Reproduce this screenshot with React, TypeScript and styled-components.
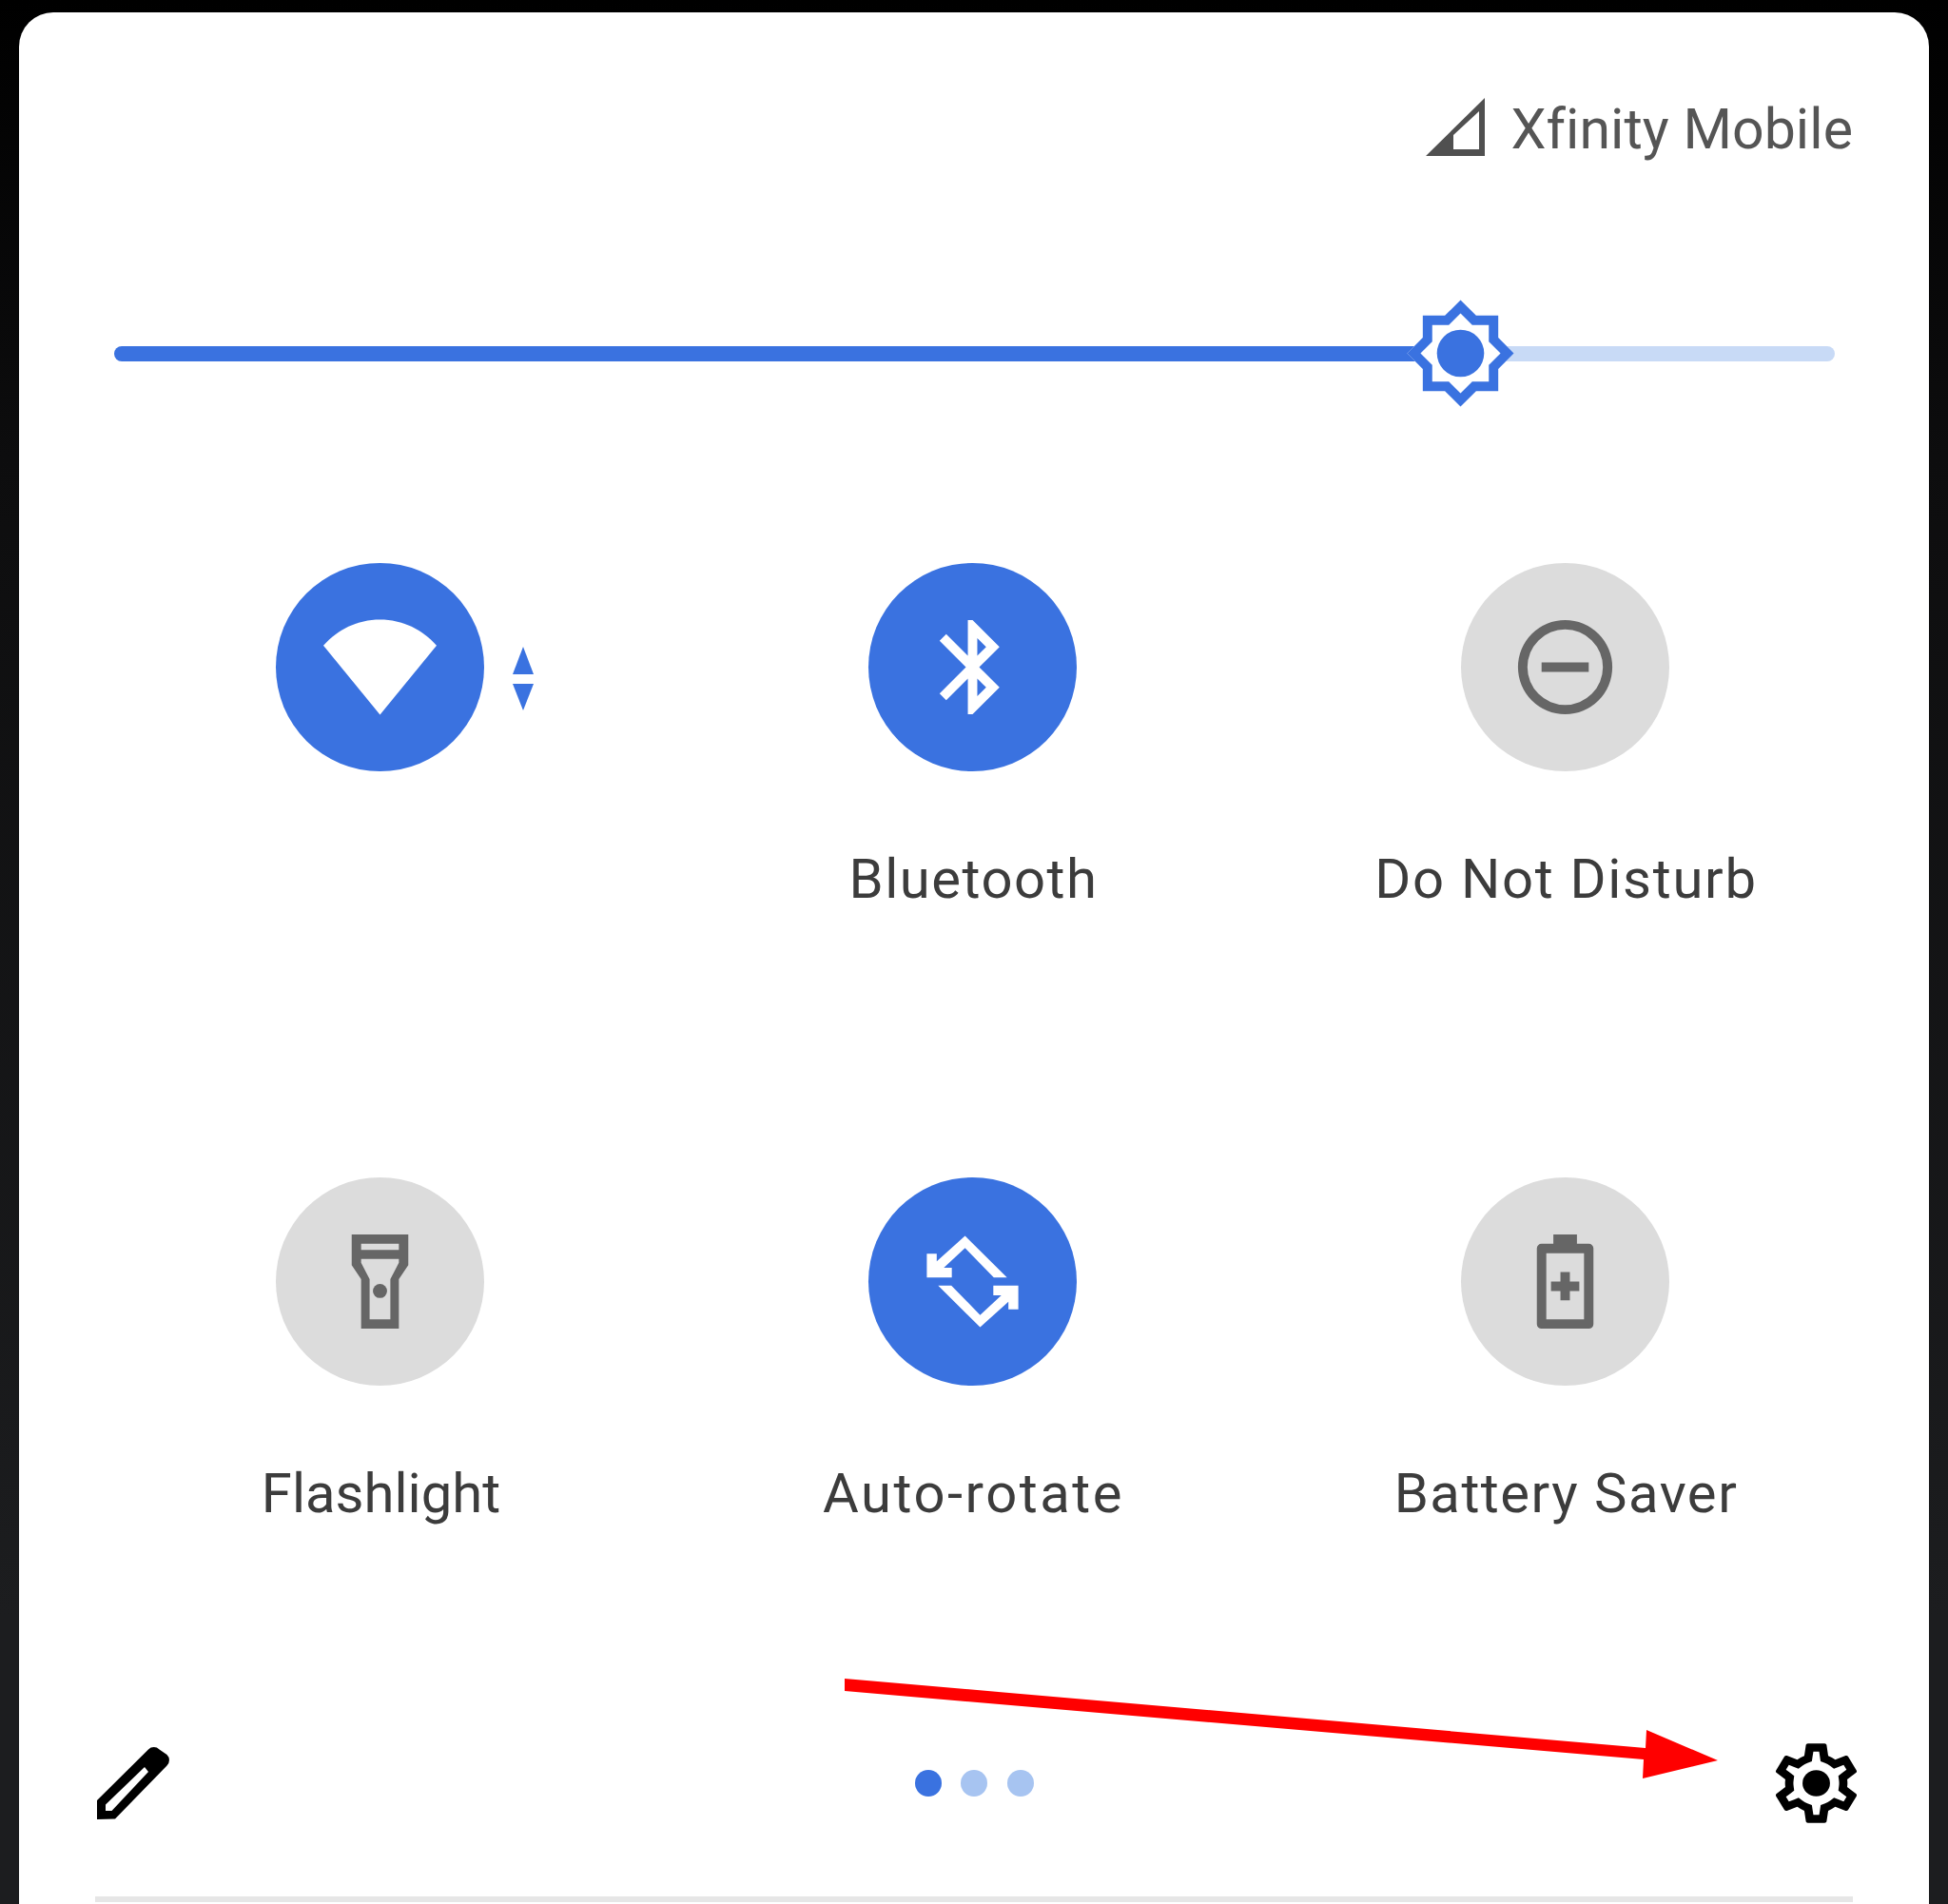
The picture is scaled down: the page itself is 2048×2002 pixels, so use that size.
import React from "react";
import styled, { createGlobalStyle } from "styled-components";

const Global = createGlobalStyle`
  html, body { margin: 0; padding: 0; }
  body { font-family: Roboto, "Noto Sans", sans-serif; }
`;

const Page = styled.div`
  position: relative;
  width: 2048px;
  height: 2002px;
  overflow: hidden;
  box-sizing: border-box;
  padding: 13px 20px 0 20px;
  background: linear-gradient(#000 0, #0d0d0e 480px, #1c1d1f 1700px);
`;

const Panel = styled.div`
  width: 2008px;
  height: 2040px;
  box-sizing: border-box;
  background: #fff;
  border-radius: 36px 36px 0 0;
  display: flex;
  flex-direction: column;
  padding-top: 91px;
  filter: blur(0.6px);
`;

const Carrier = styled.div`
  display: flex;
  justify-content: flex-end;
  align-items: center;
  gap: 27px;
  height: 64px;
  padding-right: 80px;
  color: #555;
  font-size: 59px;
  line-height: 64px;
  letter-spacing: 0.05px;
`;

const CarrierIcon = styled.svg`
  width: 62px;
  height: 61px;
  margin-top: -5px;
  fill: #505050;
`;

const SliderRow = styled.div`
  display: flex;
  align-items: center;
  height: 119px;
  margin: 144px 99px 0 100px;
`;

const TrackFill = styled.div`
  flex: 0 0 1368px;
  height: 16px;
  margin-right: -12px;
  border-radius: 8px 0 0 8px;
  background: #3a72e0;
`;

const Thumb = styled.svg`
  flex: none;
  width: 119px;
  height: 119px;
  position: relative;
  z-index: 1;
`;

const TrackRest = styled.div`
  flex: 1;
  height: 16px;
  margin-left: -12px;
  border-radius: 0 8px 8px 0;
  background: #c8daf6;
`;

const Grid = styled.div`
  display: grid;
  grid-template-columns: repeat(3, 623px);
  row-gap: 280.5px;
  margin: 160.5px 0 0 67.5px;
`;

const Tile = styled.div`
  display: flex;
  flex-direction: column;
  align-items: center;
  height: 365.5px;
`;

const Circle = styled.div<{ $on: boolean }>`
  position: relative;
  flex: none;
  width: 219px;
  height: 219px;
  border-radius: 50%;
  display: flex;
  align-items: center;
  justify-content: center;
  background: ${(p) => (p.$on ? "#3a72e0" : "#dcdcdc")};
  color: ${(p) => (p.$on ? "#fff" : "#666")};
`;

const Glyph = styled.svg`
  width: 119px;
  height: 119px;
  fill: currentColor;
`;

const Activity = styled.svg`
  position: absolute;
  left: 249.5px;
  top: 88.5px;
  width: 22px;
  height: 67px;
  fill: #3a72e0;
`;

const Label = styled.div<{ $track: number }>`
  margin-top: 81px;
  padding-left: 3px;
  font-size: 58px;
  line-height: 64px;
  letter-spacing: ${(p) => p.$track}px;
  color: #3c3c3c;
  white-space: nowrap;
`;

const Footer = styled.div`
  display: grid;
  grid-template-columns: 1fr auto 1fr;
  align-items: center;
  height: 100px;
  margin: 222px 80px 0;
`;

const Pencil = styled.svg`
  width: 80px;
  height: 80px;
  fill: #000;
`;

const Dots = styled.div`
  display: flex;
  gap: 20.5px;
`;

const Dot = styled.span<{ $active?: boolean }>`
  width: 28px;
  height: 28px;
  border-radius: 50%;
  background: ${(p) => (p.$active ? "#3a72e0" : "#a7c4f1")};
`;

const Gear = styled.svg`
  justify-self: end;
  width: 105px;
  height: 100px;
  margin-right: -13.5px;
  fill: #000;
`;

const Divider = styled.div`
  height: 6px;
  margin: 69px 80px 0;
  background: #e6e6e6;
`;

const Annotation = styled.svg`
  position: absolute;
  left: 0;
  top: 0;
  width: 2048px;
  height: 2002px;
  pointer-events: none;
  z-index: 2;
`;

const GEAR =
  "M19.43 12.98c.04-.32.07-.64.07-.98 0-.34-.03-.66-.07-.98l2.11-1.65c.19-.15.24-.42.12-.64l-2-3.46c-.09-.16-.26-.25-.44-.25-.06 0-.12.01-.17.03l-2.49 1c-.52-.4-1.08-.73-1.69-.98l-.38-2.65C14.46 2.18 14.25 2 14 2h-4c-.25 0-.46.18-.49.42l-.38 2.65c-.61.25-1.17.59-1.69.98l-2.49-1c-.06-.02-.12-.03-.18-.03-.17 0-.34.09-.43.25l-2 3.46c-.13.22-.07.49.12.64l2.11 1.65c-.04.32-.07.65-.07.98 0 .33.03.66.07.98l-2.11 1.65c-.19.15-.24.42-.12.64l2 3.46c.09.16.26.25.44.25.06 0 .12-.01.17-.03l2.49-1c.52.4 1.08.73 1.69.98l.38 2.65c.03.24.24.42.49.42h4c.25 0 .46-.18.49-.42l.38-2.65c.61-.25 1.17-.59 1.69-.98l2.49 1c.06.02.12.03.18.03.17 0 .34-.09.43-.25l2-3.46c.12-.22.07-.49-.12-.64l-2.11-1.65zm-1.98-1.71c.04.31.05.52.05.73 0 .21-.02.43-.05.73l-.14 1.13.89.7 1.08.84-.7 1.21-1.27-.51-1.04-.42-.9.68c-.43.32-.84.56-1.25.73l-1.06.43-.16 1.13-.2 1.35h-1.4l-.19-1.35-.16-1.13-1.06-.43c-.43-.18-.83-.41-1.23-.71l-.91-.7-1.06.43-1.27.51-.7-1.21 1.08-.84.89-.7-.14-1.13c-.03-.31-.05-.54-.05-.74s.02-.43.05-.73l.14-1.13-.89-.7-1.08-.84.7-1.21 1.27.51 1.04.42.9-.68c.43-.32.84-.56 1.25-.73l1.06-.43.16-1.13.2-1.35h1.39l.19 1.35.16 1.13 1.06.43c.43.18.83.41 1.23.71l.91.7 1.06-.43 1.27-.51.7 1.21-1.07.85-.89.7.14 1.13z";

const WifiIcon = () => (
  <Glyph viewBox="0 0 24 24">
    <path d="M0 7.4C3 4 7.2 1.9 12 1.9S21 4 24 7.4L12 22.1Z" />
  </Glyph>
);
const BluetoothIcon = () => (
  <Glyph viewBox="0 0 24 24">
    <path d="M17.71 7.71L12 2h-1v7.59L6.41 5 5 6.41 10.59 12 5 17.59 6.41 19 11 14.41V22h1l5.71-5.71-4.3-4.29 4.3-4.29zM13 5.83l1.88 1.88L13 9.59V5.83zm1.88 10.46L13 18.17v-3.76l1.88 1.88z" />
  </Glyph>
);
const DndIcon = () => (
  <Glyph viewBox="0 0 24 24">
    <path
      fillRule="evenodd"
      d="M12 2a10 10 0 1 0 0 20 10 10 0 0 0 0-20zm0 2a8 8 0 1 1 0 16 8 8 0 0 1 0-16zM7 11h10v2H7z"
    />
  </Glyph>
);
const FlashlightIcon = () => (
  <Glyph viewBox="0 0 24 24">
    <path
      fillRule="evenodd"
      d="M6 2h12v6.5l-2 3V22H8V11.5l-2-3zM8 4v1.3h8V4zM8 7.2v.8l1.8 3.5V20h4.4v-8.5L16 8v-.8z"
    />
    <circle cx="12" cy="14" r="1.5" />
  </Glyph>
);
const RotateIcon = () => (
  <Glyph viewBox="0 0 24 24">
    <path d="M10.4 2.3L19.3 11.15H16.5L10.4 4.9L5.9 9.1H7.6V11.15H2.3V6.1H4.4V7.7Z" />
    <path d="M13.6 21.7L4.7 12.85H7.5L13.6 19.1L18.1 14.9H16.4V12.85H21.7V17.9H19.6V16.3Z" />
  </Glyph>
);
const BatteryIcon = () => (
  <Glyph viewBox="0 0 24 24">
    <path
      fillRule="evenodd"
      d="M17 4h-2.5V2h-5v2H7a1 1 0 0 0-1 1v16a1 1 0 0 0 1 1h10a1 1 0 0 0 1-1V5a1 1 0 0 0-1-1zM16 20H8V6h8z"
    />
    <path d="M11 16h2v-2h2v-2h-2v-2h-2v2H9v2h2z" />
  </Glyph>
);

type TileData = {
  icon: React.ReactNode;
  on: boolean;
  label?: string;
  track?: number;
  activity?: boolean;
};

const tiles: TileData[] = [
  { icon: <WifiIcon />, on: true, activity: true },
  { icon: <BluetoothIcon />, on: true, label: "Bluetooth", track: 1.5 },
  { icon: <DndIcon />, on: false, label: "Do Not Disturb", track: 1.7 },
  { icon: <FlashlightIcon />, on: false, label: "Flashlight", track: 0 },
  { icon: <RotateIcon />, on: true, label: "Auto-rotate", track: 2.5 },
  { icon: <BatteryIcon />, on: false, label: "Battery Saver", track: 1.5 },
];

export default function App() {
  return (
    <Page>
      <Global />
      <Panel>
        <Carrier>
          <CarrierIcon viewBox="0 0 62 61">
            <path fillRule="evenodd" d="M0 61L62 0V61ZM29 54H56V14L29 39Z" />
          </CarrierIcon>
          <span>Xfinity Mobile</span>
        </Carrier>
        <SliderRow>
          <TrackFill />
          <Thumb viewBox="0 0 24 24">
            <path
              fill="#fff"
              d="M20 8.69V4h-4.69L12 .69 8.69 4H4v4.69L.69 12 4 15.31V20h4.69L12 23.31 15.31 20H20v-4.69L23.31 12z"
            />
            <path
              fill="#3a72e0"
              d="M20 8.69V4h-4.69L12 .69 8.69 4H4v4.69L.69 12 4 15.31V20h4.69L12 23.31 15.31 20H20v-4.69L23.31 12 20 8.69zm-2 5.79V18h-3.52L12 20.48 9.52 18H6v-3.52L3.52 12 6 9.52V6h3.52L12 3.52 14.48 6H18v3.52L20.48 12 18 14.48z"
            />
            <circle cx="12" cy="12" r="5" fill="#3a72e0" />
          </Thumb>
          <TrackRest />
        </SliderRow>
        <Grid>
          {tiles.map((t, i) => (
            <Tile key={i}>
              <Circle $on={t.on}>
                {t.icon}
                {t.activity && (
                  <Activity viewBox="0 0 22 67">
                    <path d="M11 0L22 29H0Z" />
                    <path d="M0 39H22L11 67Z" />
                  </Activity>
                )}
              </Circle>
              {t.label && <Label $track={t.track ?? 0}>{t.label}</Label>}
            </Tile>
          ))}
        </Grid>
        <Footer>
          <Pencil viewBox="0 0 80 80">
            <path
              fillRule="evenodd"
              d="M2 78V58L56 4.5a8 8 0 0 1 11.5 0L75.5 10a8 8 0 0 1 0 11.5L21 77.5ZM11 62.5V69H17.5L56 28 52 23Z"
            />
          </Pencil>
          <Dots>
            <Dot $active />
            <Dot />
            <Dot />
          </Dots>
          <Gear viewBox="0 0 24 24" preserveAspectRatio="none">
            <path d={GEAR} />
            <circle cx="12" cy="12" r="3.3" />
          </Gear>
        </Footer>
        <Divider />
      </Panel>
      <Annotation viewBox="0 0 2048 2002">
        <polygon
          fill="#ff0000"
          points="888,1765 1730,1838 1731,1819 1806,1851 1727,1870 1728,1850 888,1778"
        />
      </Annotation>
    </Page>
  );
}
